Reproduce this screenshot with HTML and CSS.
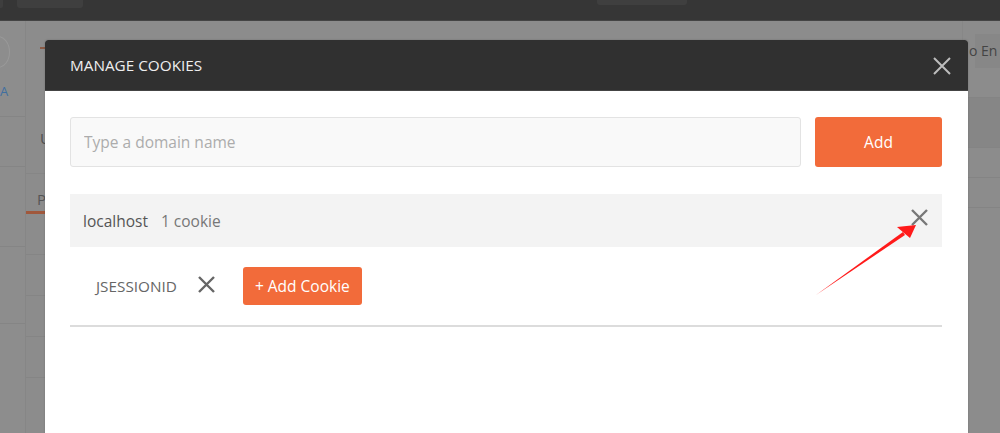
FILE: index.html
```html
<!DOCTYPE html>
<html>
<head>
<meta charset="utf-8">
<link rel="stylesheet" href="styles.css">
</head>
<body>
<div class="app">
  <div class="topbar">
    <div class="tb-stub"></div>
    <div class="tb-btn"></div>
    <div class="tb-spacer"></div>
    <div class="tb-btn2"></div>
  </div>
  <div class="main">
    <div class="side">
      <div class="side-top"><div class="circle"></div></div>
      <div class="side-link">A</div>
      <div class="side-row r1"></div>
      <div class="side-row r2"></div>
      <div class="side-row r3"></div>
      <div class="side-row r4"></div>
    </div>
    <div class="col2">
      <div class="c2-top"><span class="tick"></span></div>
      <div class="c2-u">U</div>
      <div class="c2-box"></div>
      <div class="c2-p">P</div>
      <div class="c2-row"></div>
      <div class="c2-row"></div>
      <div class="c2-row"></div>
      <div class="c2-row"></div>
    </div>
    <div class="center"></div>
    <div class="right">
      <div class="env">o En</div>
      <div class="r-row"></div>
      <div class="r-row tall"></div>
      <div class="r-row"></div>
      <div class="r-row"></div>
    </div>
  </div>
</div>

<div class="modal">
  <div class="modal-header">
    <span class="modal-title">MANAGE COOKIES</span>
    <svg class="close" width="18" height="18" viewBox="0 0 18 18"><path d="M1 1L17 17M17 1L1 17" stroke="#bdbdbd" stroke-width="2" fill="none"/></svg>
  </div>
  <div class="modal-body">
    <div class="domain-form">
      <input class="domain-input" type="text" placeholder="Type a domain name">
      <button class="btn add-btn">Add</button>
    </div>
    <div class="domain-row">
      <span class="domain-name">localhost</span>
      <span class="domain-count">1 cookie</span>
      <svg class="row-x" width="17" height="17" viewBox="0 0 17 17"><path d="M1 1L16 16M16 1L1 16" stroke="#777" stroke-width="2.4" fill="none"/></svg>
    </div>
    <div class="cookie-row">
      <span class="cookie-name">JSESSIONID</span>
      <svg class="cookie-x" width="17" height="17" viewBox="0 0 17 17"><path d="M1 1L16 16M16 1L1 16" stroke="#666" stroke-width="2.4" fill="none"/></svg>
      <button class="btn add-cookie">+ Add Cookie</button>
    </div>
  </div>
</div>

<svg class="arrow" width="1000" height="433" viewBox="0 0 1000 433">
  <path d="M816 295 L903 232 L905 235 Z" fill="#ff1a1a"/>
  <path d="M916 225 L897 227 L904 233 L910 238 Z" fill="#ff1a1a"/>
</svg>
</body>
</html>
```

FILE: styles.css
```css
* { box-sizing: border-box; }
html, body { margin: 0; padding: 0; }
body {
  width: 1000px;
  height: 433px;
  overflow: hidden;
  background: #8c8c8c;
  font-family: "Open Sans", "Noto Sans", sans-serif;
  position: relative;
}
.app { display: flex; flex-direction: column; height: 433px; }
.topbar {
  height: 21px;
  background: #363636;
  display: flex;
  align-items: flex-start;
  border-bottom: 1px solid #444;
}
.tb-stub { width: 3px; height: 8px; background: #3e3e3e; border-radius: 0 0 2px 0; }
.tb-btn { width: 66px; height: 8px; margin-left: 14px; background: #3f3f3f; border-radius: 0 0 3px 3px; }
.tb-spacer { flex: 0 0 514px; }
.tb-btn2 { width: 90px; height: 5px; background: #3f3f3f; border-radius: 0 0 3px 3px; }

.main { flex: 1; display: flex; }
.side { width: 26px; border-right: 1px solid #868686; background: #8d8d8d; }
.side-top { height: 62px; position: relative; overflow: hidden; }
.circle {
  width: 24px; height: 32px; border: 1px solid #999; border-radius: 50%;
  margin: 15px 0 0 -14px;
}
.side-link { color: #3f6fa0; font-size: 13px; line-height: 16px; padding-left: 0; }
.side-row { border-bottom: 1px solid #858585; }
.r1 { height: 18px; }
.r2 { height: 50px; }
.r3 { height: 80px; }
.r4 { height: 77px; }

.col2 { width: 19px; background: #8c8c8c; }
.c2-top { height: 27px; position: relative; }
.tick { display: block; width: 6px; height: 2px; background: #8a5a45; margin: 26px 0 0 14px; }
.c2-u { color: #505050; font-size: 15px; line-height: 20px; padding: 54px 0 0 14px; height: 100px; border-bottom: 1px solid #868686; }
.c2-box { height: 0; }
.c2-p { color: #555; font-size: 15px; height: 40px; padding: 15px 0 0 11px; border-bottom: 3px solid #a0583c; line-height: 20px; }
.c2-row { height: 41px; border-bottom: 1px solid #858585; }

.center { flex: 1; }
.right { width: 38px; border-left: 1px solid #878787; padding-top: 13px; }
.env {
  height: 34px; white-space: nowrap;
  color: #444; font-size: 14px; line-height: 34px; padding-left: 6px;
  background: linear-gradient(to right, transparent 12px, #878787 12px);
}
.r-row { height: 30px; border-bottom: 1px solid #848484; }
.r-row.tall { height: 50px; background: #868686; }

.modal {
  position: absolute;
  left: 45px;
  top: 40px;
  width: 923px;
  height: 420px;
  background: #fff;
  border-radius: 3px 3px 0 0;
  box-shadow: 0 0 2px rgba(0,0,0,0.2);
}
.modal-header {
  height: 51px;
  background: #303030;
  border-radius: 3px 3px 0 0;
  display: flex;
  align-items: center;
  padding: 0 17px 0 25px;
  border-bottom: 1px solid #444;
}
.modal-title {
  flex: 1;
  color: #eeeeee;
  font-size: 15.3px;
}
.close { display: block; margin-top: 1px; }
.modal-body { padding: 26px 26px 0 25px; }
.domain-form { display: flex; gap: 14px; }
.domain-input {
  flex: 1;
  height: 50px;
  border: 1px solid #e3e3e3;
  background: #f9f9f9;
  border-radius: 3px;
  padding: 0 13px;
  font-family: inherit;
  font-size: 15.5px;
  color: #555;
  outline: none;
}
.domain-input::placeholder { color: #acacac; }
.btn {
  border: none;
  background: #f26b3a;
  color: #fff;
  font-family: inherit;
  font-size: 15.5px;
  border-radius: 3px;
  cursor: pointer;
}
.add-btn { width: 127px; height: 50px; }
.domain-row {
  margin-top: 27px;
  height: 53px;
  background: #f3f3f3;
  display: flex;
  align-items: center;
  padding: 0 13px;
  font-size: 15.5px;
}
.domain-name { color: #555; }
.domain-count { color: #777; margin-left: 13px; flex: 1; }
.row-x { display: block; margin-right: 1px; margin-top: -6px; }
.cookie-row {
  height: 80px;
  display: flex;
  align-items: center;
  padding-left: 26px;
  border-bottom: 2px solid #dcdcdc;
}
.cookie-name { color: #666; font-size: 15.3px; }
.cookie-x { display: block; margin-left: 21px; margin-top: -4px; }
.add-cookie { margin-left: 28px; width: 119px; height: 38px; }
.arrow { position: absolute; left: 0; top: 0; pointer-events: none; }
```
